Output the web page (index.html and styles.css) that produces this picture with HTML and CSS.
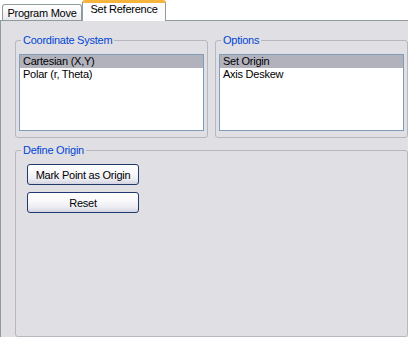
FILE: index.html
```html
<!DOCTYPE html>
<html>
<head>
<meta charset="utf-8">
<link rel="stylesheet" href="styles.css">
</head>
<body>
<div class="window">
  <div class="tabs">
    <div class="tab">Program Move</div>
    <div class="tab active">Set Reference</div>
  </div>
  <div class="panel">
    <div class="row">
      <fieldset class="group half">
        <legend>Coordinate System</legend>
        <ul class="list">
          <li class="sel">Cartesian (X,Y)</li>
          <li>Polar (r, Theta)</li>
        </ul>
      </fieldset>
      <fieldset class="group half">
        <legend>Options</legend>
        <ul class="list">
          <li class="sel">Set Origin</li>
          <li>Axis Deskew</li>
        </ul>
      </fieldset>
    </div>
    <fieldset class="group origin">
      <legend>Define Origin</legend>
      <button class="btn">Mark Point as Origin</button>
      <button class="btn">Reset</button>
    </fieldset>
  </div>
</div>
</body>
</html>
```

FILE: styles.css
```css
html, body {
  margin: 0;
  padding: 0;
  width: 408px;
  height: 337px;
  overflow: hidden;
  background: #ffffff;
  font-family: "Liberation Sans", Arial, sans-serif;
  font-size: 11px;
  letter-spacing: -0.25px;
  color: #000;
}

.window {
  width: 408px;
  height: 337px;
  display: flex;
  flex-direction: column;
}

.tabs {
  display: flex;
  align-items: flex-end;
  height: 20px;
  padding-left: 2px;
  position: relative;
  z-index: 1;
}

.tab {
  box-sizing: border-box;
  width: 80px;
  height: 16px;
  border: 1px solid #919b9c;
  border-bottom: none;
  border-radius: 3px 3px 0 0;
  background: linear-gradient(180deg, #ffffff 0%, #f6f6f9 50%, #e8e8ee 100%);
  text-align: center;
  line-height: 12px;
  padding-top: 2px;
  white-space: nowrap;
}

.tab.active {
  width: 84px;
  height: 21px;
  margin-bottom: -1px;
  background: #fcfcfe;
  border-top: 3px solid #f7b43c;
  padding-top: 0;
  border-radius: 3px 3px 0 0;
}

.panel {
  flex: 1;
  background: #e0dfe3;
  border-top: 1px solid #919b9c;
  border-left: 1px solid #919b9c;
  padding: 13px 0 0 14px;
  display: flex;
  flex-direction: column;
}

.row {
  display: flex;
  gap: 7px;
}

.group {
  margin: 0;
  padding: 0 3px 6px 3px;
  border: 1px solid #b7b7bf;
  border-radius: 3px;
  min-width: 0;
  box-sizing: border-box;
}

.group legend {
  color: #0046d5;
  padding: 0 2px;
  margin-left: 2px;
  line-height: 12px;
}

.half {
  width: 193px;
}

.list {
  list-style: none;
  margin: 8px 0 0 0;
  padding: 0;
  height: 77px;
  box-sizing: border-box;
  border: 1px solid #7f9db9;
  background: #ffffff;
}

.list li {
  height: 13px;
  line-height: 13px;
  padding-left: 3px;
  white-space: nowrap;
}

.list li.sel {
  background: #b2b2bd;
}

.origin {
  width: 393px;
  margin-top: 6px;
  height: 193px;
}

.btn {
  display: block;
  box-sizing: border-box;
  width: 112px;
  height: 21px;
  margin: 8px 0 0 8px;
  padding: 0;
  font-family: "Liberation Sans", Arial, sans-serif;
  font-size: 11px;
  letter-spacing: -0.25px;
  color: #000;
  border: 1px solid #1f3b6b;
  border-radius: 3px;
  background: linear-gradient(180deg, #ffffff 0%, #f8f8fb 45%, #ececf2 75%, #d4d4e2 100%);
}

.btn + .btn {
  margin-top: 7px;
}
```
